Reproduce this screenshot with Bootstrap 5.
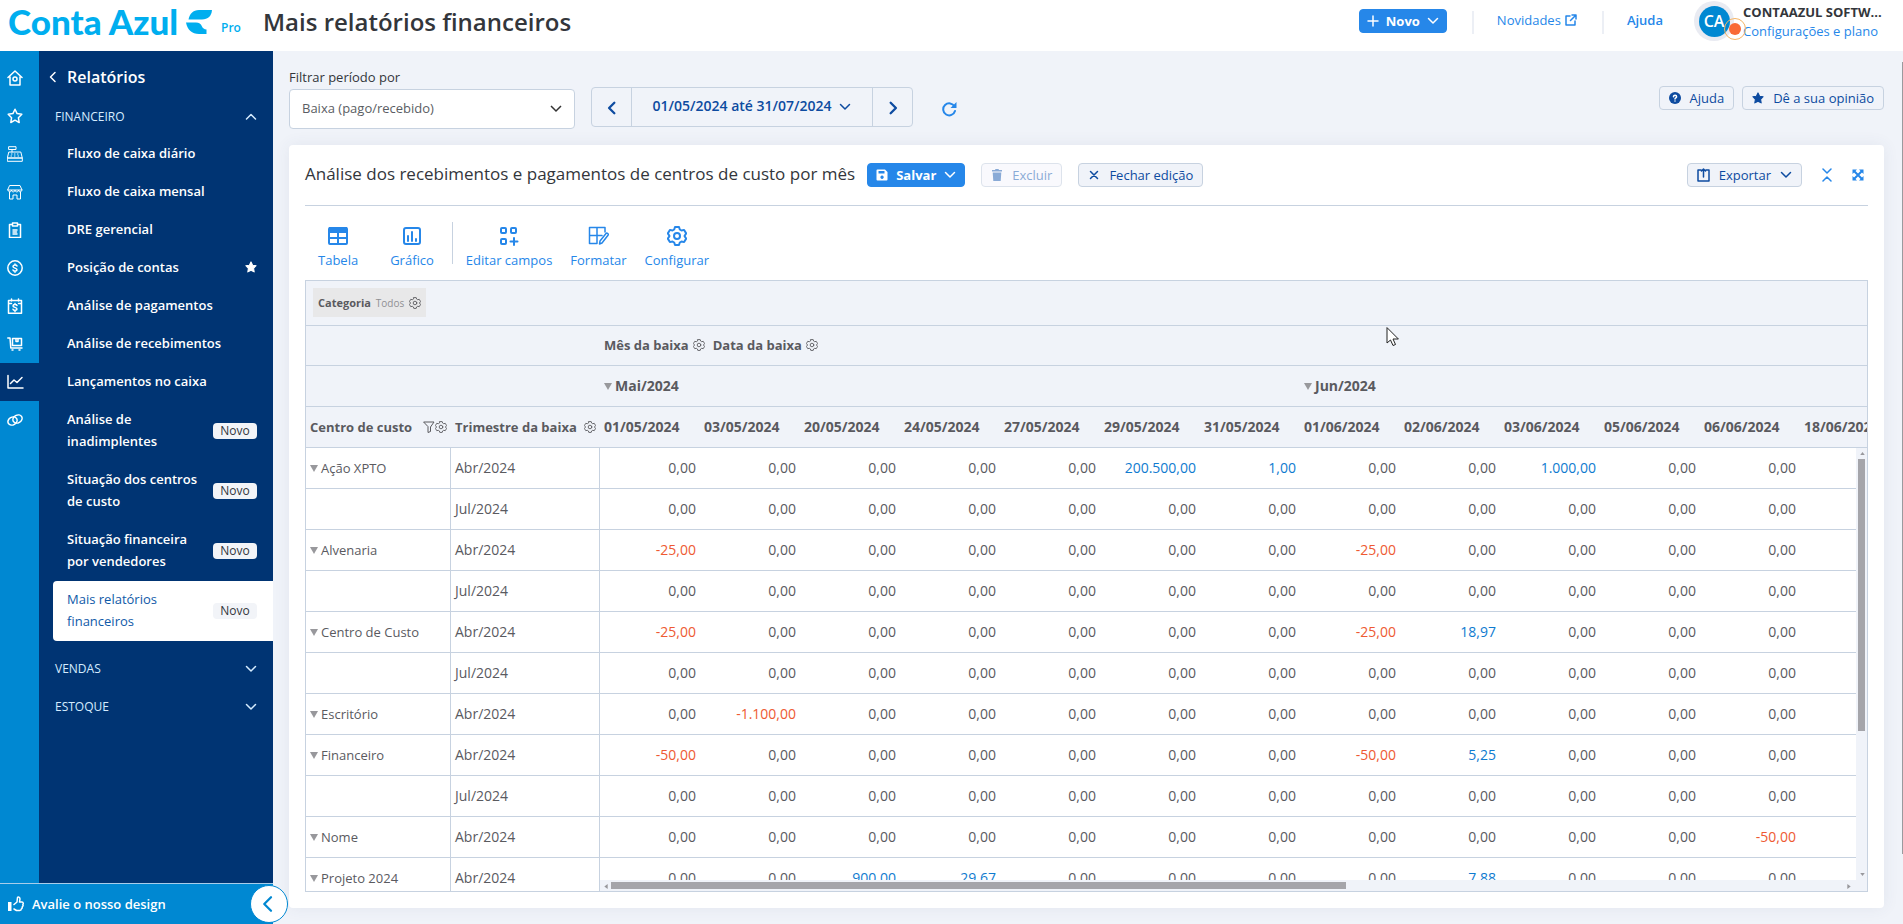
<!DOCTYPE html>
<html lang="pt-BR">
<head>
<meta charset="utf-8">
<meta name="viewport" content="width=device-width, initial-scale=1">
<title>Mais relatórios financeiros</title>
<link href="https://cdn.jsdelivr.net/npm/bootstrap@5.3.0/dist/css/bootstrap.min.css" rel="stylesheet">
<style>
:root { --line:#c7d2e0; --soft:#f0f3f9; --blue:#2687e9; --deep:#0d4ba0; --navy:#003473; --sky:#0088d2; }
body { font-family:"Open Sans","Noto Sans",sans-serif; font-size:13px; line-height:20px; color:#33363b; background:var(--soft); }
svg { fill:none; stroke:currentColor; stroke-width:1.5; stroke-linecap:round; stroke-linejoin:round; flex:none; }
svg .solid { fill:currentColor; stroke:none; }
svg.thin { stroke-width:1; }
svg.thick { stroke-width:2; }
svg.filled { fill:currentColor; }
a { text-decoration:none; color:var(--blue); }
.topbar { height:51px; background:#fff; flex:none; }
.brand { font-family:Lato,sans-serif; font-weight:900; font-size:35px; line-height:42px; color:#00aeef; padding-left:8px; width:178px; white-space:nowrap; }
.brand-mark { margin-top:10px; }
.brand-sub { font-size:12px; font-weight:600; color:#00aeef; width:42px; padding-top:18px; margin-left:8px; }
.page-title { font-size:24px; line-height:28px; font-weight:600; }
.sep { width:2px; height:23px; background:#eceff5; margin:11px 23px 0 25px; }
.top-link { margin-top:10px; }
.btn-sm2 { --bs-btn-padding-x:9px; --bs-btn-padding-y:0px; --bs-btn-font-size:13px; --bs-btn-border-radius:4px; height:24px; line-height:20px; display:inline-flex; align-items:center; gap:9px; white-space:nowrap; font-weight:500; border-color:var(--line); background:var(--soft); color:var(--deep); }
.btn-main { --bs-btn-padding-x:8px; gap:8px; background:var(--blue); border-color:var(--blue); color:#fff; font-weight:700; }
.btn-new { margin-top:9px; --bs-btn-padding-x:7px; gap:7px; }
.btn-sm2:disabled { background:#f6f6fc; color:#3b73bb; border-color:#c7d2e0; opacity:.6; }
.user { margin-left:31px; margin-right:19px; }
.avatar { width:40px; height:40px; background:#e9ebf2; border-radius:50%; margin-top:1px; }
.avatar b { width:31px; height:31px; border-radius:50%; background:var(--sky); color:#fff; font-size:16px; font-weight:600; }
.alert-dot { left:30px; top:17px; width:22px; height:22px; border:1px solid #f5b566; border-radius:50%; }
.alert-dot i { width:12px; height:12px; border-radius:50%; background:#f96a36; }
.account { width:141px; line-height:19px; margin:3px 0 0 9px; white-space:nowrap; }
.rail { width:39px; background:var(--sky); padding-top:8px; flex:none; }
.rail a { height:38px; width:39px; padding-left:7px; color:#fff; display:flex; align-items:center; }
.rail a.on { background:var(--navy); }
.menu { width:234px; background:var(--navy); color:#fff; padding-top:8px; flex:none; }
.menu-row { min-height:38px; display:flex; align-items:center; justify-content:space-between; padding:0 16px 2px 28px; color:#fff; font-weight:600; line-height:22px; }
.menu-top { padding-left:8px; font-size:16px; }
.menu-head { width:100%; border:0; background:none; padding:1px 16px 0; font-weight:400; font-size:12px; color:#d5ecff; }
.menu-two { min-height:60px; }
.menu-row.on { background:#fff; color:#0f5aa8; font-weight:500; margin-left:14px; padding-left:14px; border-radius:4px 0 0 4px; }
.tag { background:#f2f4f8; color:#33363b; font-size:12px; font-weight:400; line-height:16px; width:44px; text-align:center; border-radius:4px; flex:none; margin-top:2px; }
.rate { height:41px; background:var(--sky); border-top:1px solid #a8cdea; color:#fff; font-weight:600; padding-left:8px; flex:none; }
.fold { right:-15px; top:1px; width:38px; height:38px; border-radius:50%; background:#fff; border:1px solid var(--sky); color:var(--sky); padding:0 2px 0 0; }
.side { width:273px; flex:none; }
.work { min-width:0; }
.fit { min-height:0; }
.filter-bar { height:78px; padding-top:16px; }
.field { width:286px; height:40px; border:1px solid var(--line); border-radius:4px; color:#5a5d63; font-size:13px; padding:0 12px; margin-top:2px; background-color:#fff; }
.form-select.field { background-image:url("data:image/svg+xml,%3csvg xmlns='http://www.w3.org/2000/svg' viewBox='0 0 12 12'%3e%3cpath fill='none' stroke='%23333' stroke-width='1.5' d='M1 3l5 5 5-5'/%3e%3c/svg%3e"); background-size:12px; }
.range { height:40px; border:1px solid var(--line); border-radius:4px; margin:20px 0 0 16px; }
.range button { border:0; background:none; color:var(--deep); font-weight:500; padding:0 0 2px; width:39px; }
.range .mid { width:242px; border:solid var(--line); border-width:0 1px; font-size:14px; font-weight:600; }
.bare { border:0; background:none; padding:0; color:var(--blue); display:flex; }
.reload { margin:34px 0 0 28px; }
.help { margin:19px 19px 0; }
.panel { background:#fff; border-radius:4px; box-shadow:0 0 16px rgba(60,80,120,.08); padding:0 16px 16px; margin:16px 19px 16px 0; }
.panel-head { height:61px; border-bottom:1px solid var(--line); }
.panel-title { font-size:17px; line-height:24px; font-weight:400; margin:0 12px 2px 0; }
.tools { height:74px; padding:16px 13px 0; }
.tool { border:0; background:none; padding:4px 0 0; color:var(--blue); display:flex; flex-direction:column; align-items:center; gap:4px; margin-right:18px; }
.tool-wide { margin-right:32px; }
.vline { width:1px; height:42px; background:var(--line); margin-right:13px; }
.pivot { border:1px solid var(--line); background:#fff; color:#5a5a5f; }
.filters { height:45px; background:var(--soft); border-bottom:1px solid var(--line); padding:7px; }
.chip { height:29px; background:#e8e8e9; font-size:11px; padding:0 5px; width:113px; }
.chip small { font-size:10px; color:#909094; }
.grid { table-layout:fixed; width:1594px; border-collapse:separate; border-spacing:0; }
.grid th, .grid td { height:41px; padding:0 4px 1px; border-bottom:1px solid var(--line); white-space:nowrap; line-height:20px; }
.grid thead th { background:var(--soft); font-weight:700; }
.grid thead tr:first-child th { height:40px; }
.grid tbody th { font-weight:400; border-right:1px solid var(--line); }
.grid tbody th + th, .grid td, .grid thead .date { font-size:14px; }
.grid td { text-align:right; }
.neg { color:#ee5a32; } .pos { color:#0f7bd0; }
.tri { display:inline-block; border:4px solid transparent; border-top:7px solid #98989c; border-bottom:0; margin-right:3px; vertical-align:1px; }
.vbar { right:0; top:167px; bottom:11px; width:11px; background:var(--soft); }
.hbar { left:294px; right:0; bottom:0; height:11px; background:var(--soft); }
.vbar i { left:2px; top:11px; width:7px; height:63%; background:#a5a5aa; }
.hbar i { left:11px; top:2px; height:7px; width:58%; background:#a5a5aa; }
.vbar svg, .hbar svg { color:#98989c; }
.page-bar { right:0; top:62px; bottom:70px; width:1px; background:#9a9a9e; }
.pointer { left:1386px; top:327px; color:#222; }
</style>
</head>
<body>
<svg width="0" height="0" class="position-absolute" aria-hidden="true">
  <symbol id="gear" viewBox="0 0 20 20"><circle cx="10" cy="10" r="3"/><path d="M8 1h4l.8 2.500 1.700 1 2.600-.6 2.100 3.500L17.500 10l1.700 2.600-2.100 3.500-2.600-.6-1.700 1L12 19H8l-.8-2.500-1.700-1-2.600.6-2.100-3.500L2.500 10 .8 7.400l2.100-3.500 2.600.6 1.700-1z"/></symbol>
  <symbol id="down" viewBox="0 0 12 12"><path d="M1.500 3.500 6 8l4.500-4.500"/></symbol>
  <symbol id="left" viewBox="0 0 12 12"><path d="M8 1.500 3.500 6 8 10.500"/></symbol>
  <symbol id="right" viewBox="0 0 12 12"><path d="M4 1.500 8.500 6 4 10.500"/></symbol>
  <symbol id="star" viewBox="0 0 16 16"><path d="m8 1.200 2.100 4.400 4.700.7-3.400 3.400.8 4.800L8 12.200l-4.200 2.300.8-4.800L1.200 6.300l4.700-.7z"/></symbol>
</svg>
<div class="d-flex flex-column vh-100 overflow-hidden position-relative">
  <header class="topbar d-flex align-items-start">
    <div class="brand">Conta Azul</div>
    <svg class="brand-mark ms-2" width="27" height="24" viewBox="0 0 27 24"><g fill="#00aeef" stroke="none"><path d="M26 0H13C7 0 3.500 4 2.500 9.500H16C22 9.500 25.500 6 26 0Z"/><path d="M0 12.500h10c3 0 5 1.500 6 4 .8 1.800 2.200 2.800 4.500 3V24H13C6 24 1.500 20 0 12.500Z"/></g></svg>
    <span class="brand-sub">Pro</span>
    <h1 class="page-title mb-0 mt-2">Mais relatórios financeiros</h1>
    <div class="d-flex ms-auto align-items-start">
      <button class="btn btn-sm2 btn-main btn-new"><svg width="12" height="12" viewBox="0 0 12 12"><path d="M6 1v10M1 6h10"/></svg>Novo<svg width="12" height="12"><use href="#down"/></svg></button>
      <span class="sep"></span>
      <a href="#" class="top-link d-flex align-items-center gap-1">Novidades<svg width="12" height="12" viewBox="0 0 12 12"><path d="M5 2H1v9h9V7M7 1h4v4M11 1 5.500 6.500"/></svg></a>
      <span class="sep"></span>
      <a href="#" class="top-link fw-semibold">Ajuda</a>
      <div class="user d-flex">
        <div class="avatar position-relative d-flex align-items-center justify-content-center"><b class="d-flex align-items-center justify-content-center">CA</b><span class="alert-dot position-absolute d-flex align-items-center justify-content-center"><i></i></span></div>
        <div class="account"><div class="fw-bold">CONTAAZUL SOFTW...</div><a href="#">Configurações e plano</a></div>
      </div>
    </div>
  </header>
  <div class="fit d-flex flex-grow-1">
    <aside class="side d-flex flex-column">
      <div class="d-flex flex-grow-1">
        <nav class="rail" aria-label="Módulos">
          <a href="#" aria-label="Início"><svg width="16" height="16" viewBox="0 0 16 16"><path d="M1 7.500 8 1l7 6.500M3 6.500V15h10V6.500"/><circle cx="8" cy="9" r="2"/></svg></a>
          <a href="#" aria-label="Favoritos"><svg width="16" height="16"><use href="#star"/></svg></a>
          <a href="#" aria-label="Vendas"><svg class="thin" width="16" height="16" viewBox="0 0 16 16"><path d="M.7 12h14.600v3.300H.7zM2.200 6h11.600l1.500 6H.7zM5 6V3.500M2 .7h7v2.800H2zM4.500 8h.5M7.500 8h.5M10.500 8h.5M4 10h.5M7.500 10h.5M11 10h.5"/></svg></a>
          <a href="#" aria-label="Loja"><svg class="thin" width="16" height="16" viewBox="0 0 16 16"><path d="M3 1.500h10l2 4.500H1zM1 6c0 2.500 3.500 2.500 3.500 0C4.500 8.500 8 8.500 8 6c0 2.500 3.500 2.500 3.500 0 0 2.500 3.500 2.500 3.500 0M2.500 8v7H6v-4h4v4h3.500V8"/></svg></a>
          <a href="#" aria-label="Contratos"><svg width="16" height="16" viewBox="0 0 16 16"><path d="M5 2.500H2.500v13h11v-13H11M5.500 1h5v3h-5zM6 8h4M6 10h3.500M6 12h4"/></svg></a>
          <a href="#" aria-label="Financeiro"><svg width="16" height="16" viewBox="0 0 16 16"><circle cx="8" cy="8" r="7.200"/><path d="M10 6C9.500 4.600 6 4.800 6 6.500S10 8 10 9.700 6.500 11.500 6 10M8 4v1M8 11.200v1"/></svg></a>
          <a href="#" aria-label="Pagamentos"><svg width="16" height="16" viewBox="0 0 16 16"><path d="M1.500 2.500h13v12.700h-13zM1.500 5.500h3M11.500 5.500h3M4.500 1v2M11.500 1v2M10 7.500c-.5-1.400-4-1.200-4 .4s4 1.300 4 3-3.500 1.800-4 .3M8 5.500v1M8 12.500v1"/></svg></a>
          <a href="#" aria-label="Estoque"><svg width="16" height="16" viewBox="0 0 16 16"><path d="M.8 2H3l.8 10H15M5.500 2.500h9v7h-9zM9 2.500v3h2v-3M5 14h1M12 14h1"/></svg></a>
          <a href="#" class="on" aria-label="Relatórios"><svg width="17" height="16" viewBox="0 0 17 16"><path d="M1 1.500V14h15M3.500 9.500 7 6l3 2.500 5-5"/></svg></a>
          <a href="#" aria-label="Integrações"><svg width="16" height="16" viewBox="0 0 16 16"><ellipse cx="5.500" cy="9" rx="4.800" ry="3.800" transform="rotate(-30 5.500 9)"/><ellipse cx="10.500" cy="7" rx="4.800" ry="3.800" transform="rotate(-30 10.500 7)"/></svg></a>
        </nav>
        <nav class="menu" aria-label="Relatórios">
          <div class="menu-row menu-top justify-content-start"><svg class="me-2" width="12" height="12"><use href="#left"/></svg>Relatórios</div>
          <button class="menu-row menu-head">FINANCEIRO<svg width="12" height="12" viewBox="0 0 12 12"><path d="M1.500 8 6 3.500 10.500 8"/></svg></button>
          <a href="#" class="menu-row">Fluxo de caixa diário</a>
          <a href="#" class="menu-row">Fluxo de caixa mensal</a>
          <a href="#" class="menu-row">DRE gerencial</a>
          <a href="#" class="menu-row">Posição de contas<svg class="filled" width="12" height="12"><use href="#star"/></svg></a>
          <a href="#" class="menu-row">Análise de pagamentos</a>
          <a href="#" class="menu-row">Análise de recebimentos</a>
          <a href="#" class="menu-row">Lançamentos no caixa</a>
          <a href="#" class="menu-row menu-two"><span>Análise de<br>inadimplentes</span><span class="tag">Novo</span></a>
          <a href="#" class="menu-row menu-two"><span>Situação dos centros<br>de custo</span><span class="tag">Novo</span></a>
          <a href="#" class="menu-row menu-two"><span>Situação financeira<br>por vendedores</span><span class="tag">Novo</span></a>
          <a href="#" class="menu-row menu-two on"><span>Mais relatórios<br>financeiros</span><span class="tag">Novo</span></a>
          <button class="menu-row menu-head mt-2">VENDAS<svg width="12" height="12"><use href="#down"/></svg></button>
          <button class="menu-row menu-head">ESTOQUE<svg width="12" height="12"><use href="#down"/></svg></button>
        </nav>
      </div>
      <div class="rate position-relative d-flex align-items-center gap-2">
        <svg width="16" height="16" viewBox="0 0 16 16"><path class="solid" d="M0 6h3.500v9H0z"/><path d="M6 8.500 9 6l.5-4.500C10 .5 12 1 12 3l-.5 3H14c1.500 0 1.500 2 .8 2.500.5 1 0 2-.6 2.300.2 1-.2 1.700-.8 2 0 1-.7 1.700-1.700 1.700H8.500L6 13"/></svg>Avalie o nosso design
        <button class="fold position-absolute d-flex align-items-center justify-content-center" aria-label="Recolher menu"><svg width="18" height="18"><use href="#left"/></svg></button>
      </div>
    </aside>
    <main class="work d-flex flex-column flex-grow-1 ps-3">
      <div class="filter-bar d-flex align-items-start">
        <div><label for="periodo" class="d-block">Filtrar período por</label>
          <select id="periodo" class="form-select field"><option>Baixa (pago/recebido)</option></select></div>
        <div class="range d-flex">
          <button aria-label="Período anterior"><svg class="thick" width="14" height="14"><use href="#left"/></svg></button>
          <button class="mid">01/05/2024 até 31/07/2024<svg class="ms-2" width="12" height="12"><use href="#down"/></svg></button>
          <button aria-label="Próximo período"><svg class="thick" width="14" height="14"><use href="#right"/></svg></button>
        </div>
        <button class="bare reload" aria-label="Atualizar"><svg class="thick" width="16" height="16" viewBox="0 0 16 16"><path d="M13.500 5.500A6 6 0 1 0 14 10"/><path class="solid" d="M15.500 1v6h-6z"/></svg></button>
        <div class="help ms-auto d-flex gap-2">
          <button class="btn btn-sm2"><svg width="12" height="12" viewBox="0 0 12 12"><circle class="solid" cx="6" cy="6" r="6"/><path stroke="#fff" d="M4.500 4.700C4.500 2.800 7.600 2.900 7.600 4.700 7.600 5.800 6 5.800 6 7M6 9v.1"/></svg>Ajuda</button>
          <button class="btn btn-sm2"><svg class="filled" width="12" height="12"><use href="#star"/></svg>Dê a sua opinião</button>
        </div>
      </div>
      <section class="panel fit d-flex flex-column flex-grow-1">
        <div class="panel-head d-flex align-items-center flex-shrink-0">
          <h2 class="panel-title">Análise dos recebimentos e pagamentos de centros de custo por mês</h2>
          <button class="btn btn-sm2 btn-main me-3"><svg width="12" height="12" viewBox="0 0 12 12"><path class="solid" fill-rule="evenodd" d="M1.500.5H9L11.500 3v7.500a1 1 0 0 1-1 1h-9a1 1 0 0 1-1-1v-9a1 1 0 0 1 1-1ZM2.500 2v2.500h6V2ZM6 6.500a1.700 1.700 0 1 0 .1 0Z"/></svg>Salvar<svg width="12" height="12"><use href="#down"/></svg></button>
          <button class="btn btn-sm2 me-3" disabled><svg width="12" height="12" viewBox="0 0 12 12"><path class="solid" d="M1 1h3L4.500 0h3L8 1h3v1.500H1ZM1.700 3.500h8.600L9.700 12H2.300Z"/></svg>Excluir</button>
          <button class="btn btn-sm2"><svg width="12" height="12" viewBox="0 0 12 12"><path d="m2.500 2.500 7 7M9.500 2.500l-7 7"/></svg>Fechar edição</button>
          <div class="ms-auto d-flex align-items-center gap-3">
            <button class="btn btn-sm2"><svg width="13" height="14" viewBox="0 0 13 14"><path d="M4 2H1v11h11V2H9M6.500 9V1M4.500 3l2-2 2 2"/></svg>Exportar<svg width="12" height="12"><use href="#down"/></svg></button>
            <button class="bare ms-1" aria-label="Recolher"><svg width="10" height="14" viewBox="0 0 10 14"><path d="m1 1 4 4 4-4M1 13l4-4 4 4"/></svg></button>
            <button class="bare ms-1 me-1" aria-label="Tela cheia"><svg class="thick" width="12" height="12" viewBox="0 0 12 12"><path d="m2 2 8 8M10 2l-8 8"/><path class="solid" d="M.5.500H5L.5 5ZM11.500.500H7L11.500 5ZM.5 11.500H5L.5 7ZM11.500 11.500H7L11.500 7Z"/></svg></button>
          </div>
        </div>
        <div class="tools d-flex flex-shrink-0">
          <button class="tool tool-wide"><svg width="20" height="20" viewBox="0 0 20 20"><g stroke-width="2"><rect x="1" y="2" width="18" height="16" rx="1"/><path d="M10 6v12M2 12h16"/></g><path class="solid" d="M1 1h18v6H1z"/></svg>Tabela</button>
          <button class="tool"><svg width="20" height="20" viewBox="0 0 20 20"><rect x="2" y="2" width="16" height="16" rx="2" stroke-width="2"/><path d="M6 10v5M10 6v9M14 13v2" stroke-width="2"/></svg>Gráfico</button>
          <span class="vline"></span>
          <button class="tool"><svg width="20" height="20" viewBox="0 0 20 20"><g stroke-width="2"><rect x="2" y="2" width="5" height="5" rx="1"/><rect x="12" y="2" width="5" height="5" rx="1"/><rect x="2" y="13" width="5" height="5" rx="1"/><path d="M15 12v7M11.500 15.500h7"/></g></svg>Editar campos</button>
          <button class="tool"><svg width="21" height="20" viewBox="0 0 21 20"><path d="M17 6V1.500H1.500v16H9M9 1.500v16M1.500 9.500H14M12 15l6-7.500c1-1 3 .5 2 1.800L14 17l-2.500 1z"/></svg>Formatar</button>
          <button class="tool"><svg class="thick" width="20" height="20"><use href="#gear"/></svg>Configurar</button>
        </div>
        <div class="pivot fit position-relative overflow-hidden flex-grow-1">
          <div class="filters"><div class="chip d-flex align-items-center justify-content-between"><b>Categoria</b><small>Todos</small><svg width="12" height="12"><use href="#gear"/></svg></div></div>
          <table class="grid">
            <colgroup><col style="width:145px"><col style="width:149px"><col span="13" style="width:100px"></colgroup>
            <thead>
              <tr><th colspan="2"></th><th colspan="13"><span class="d-inline-flex align-items-center gap-1">Mês da baixa <svg width="12" height="12"><use href="#gear"/></svg><span class="ms-1">Data da baixa</span><svg width="12" height="12"><use href="#gear"/></svg></span></th></tr>
              <tr><th colspan="2"></th><th colspan="7" class="date"><i class="tri"></i>Mai/2024</th><th colspan="6" class="date"><i class="tri"></i>Jun/2024</th></tr>
              <tr id="dates"><th><span class="d-flex align-items-center justify-content-between">Centro de custo<span class="d-flex"><svg class="thin" width="12" height="12" viewBox="0 0 12 12"><path d="M1 1h10L7.500 6v4.500L5 11.500V6z"/></svg><svg width="12" height="12"><use href="#gear"/></svg></span></span></th><th><span class="d-flex align-items-center justify-content-between">Trimestre da baixa<svg width="12" height="12"><use href="#gear"/></svg></span></th></tr>
            </thead>
            <tbody id="rows"></tbody>
          </table>
          <div class="hbar position-absolute"><i class="position-absolute"></i><svg class="position-absolute start-0 ms-1 mt-1" width="4" height="5" viewBox="0 0 4 6"><path class="solid" d="M4 0v6L0 3z"/></svg><svg class="position-absolute end-0 me-3 mt-1" width="4" height="5" viewBox="0 0 4 6"><path class="solid" d="M0 0v6l4-3z"/></svg></div>
          <div class="vbar position-absolute"><i class="position-absolute"></i><svg class="position-absolute top-0 mt-1 ms-1" width="5" height="3" viewBox="0 0 6 4"><path class="solid" d="M0 4h6L3 0z"/></svg><svg class="position-absolute bottom-0 mb-1 ms-1" width="5" height="3" viewBox="0 0 6 4"><path class="solid" d="M0 0h6L3 4z"/></svg></div>
        </div>
      </section>
    </main>
  </div>
  <div class="page-bar position-absolute"></div>
  <svg class="pointer thin position-absolute" width="13" height="20" viewBox="0 0 13 20"><path fill="#fff" d="M1 1v15l3.500-3L7 18.500l2.500-1L7 12h5z"/></svg>
</div>
<script>
const dates = ['01/05/2024','03/05/2024','20/05/2024','24/05/2024','27/05/2024','29/05/2024','31/05/2024','01/06/2024','02/06/2024','03/06/2024','05/06/2024','06/06/2024','18/06/2024'];
const data = [
  ['Ação XPTO','Abr/2024',{5:'200.500,00',6:'1,00',9:'1.000,00'}], ['','Jul/2024',{}],
  ['Alvenaria','Abr/2024',{0:'-25,00',7:'-25,00'}], ['','Jul/2024',{}],
  ['Centro de Custo','Abr/2024',{0:'-25,00',7:'-25,00',8:'18,97'}], ['','Jul/2024',{}],
  ['Escritório','Abr/2024',{1:'-1.100,00'}],
  ['Financeiro','Abr/2024',{0:'-50,00',7:'-50,00',8:'5,25'}], ['','Jul/2024',{}],
  ['Nome','Abr/2024',{11:'-50,00'}],
  ['Projeto 2024','Abr/2024',{2:'900,00',3:'29,67',8:'7,88'}]
];
document.getElementById('dates').insertAdjacentHTML('beforeend', dates.map(d => `<th class="date">${d}</th>`).join(''));
document.getElementById('rows').innerHTML = data.map(([name, quarter, values]) =>
  `<tr><th>${name ? '<i class="tri"></i>' + name : ''}</th><th>${quarter}</th>` +
  dates.map((d, i) => { if (i === 12) return '<td></td>'; const v = values[i]; return `<td class="${!v ? '' : v[0] === '-' ? 'neg' : 'pos'}">${v || '0,00'}</td>`; }).join('') + '</tr>').join('');
</script>
<script src="https://cdn.jsdelivr.net/npm/bootstrap@5.3.0/dist/js/bootstrap.bundle.min.js"></script>
</body>
</html>
